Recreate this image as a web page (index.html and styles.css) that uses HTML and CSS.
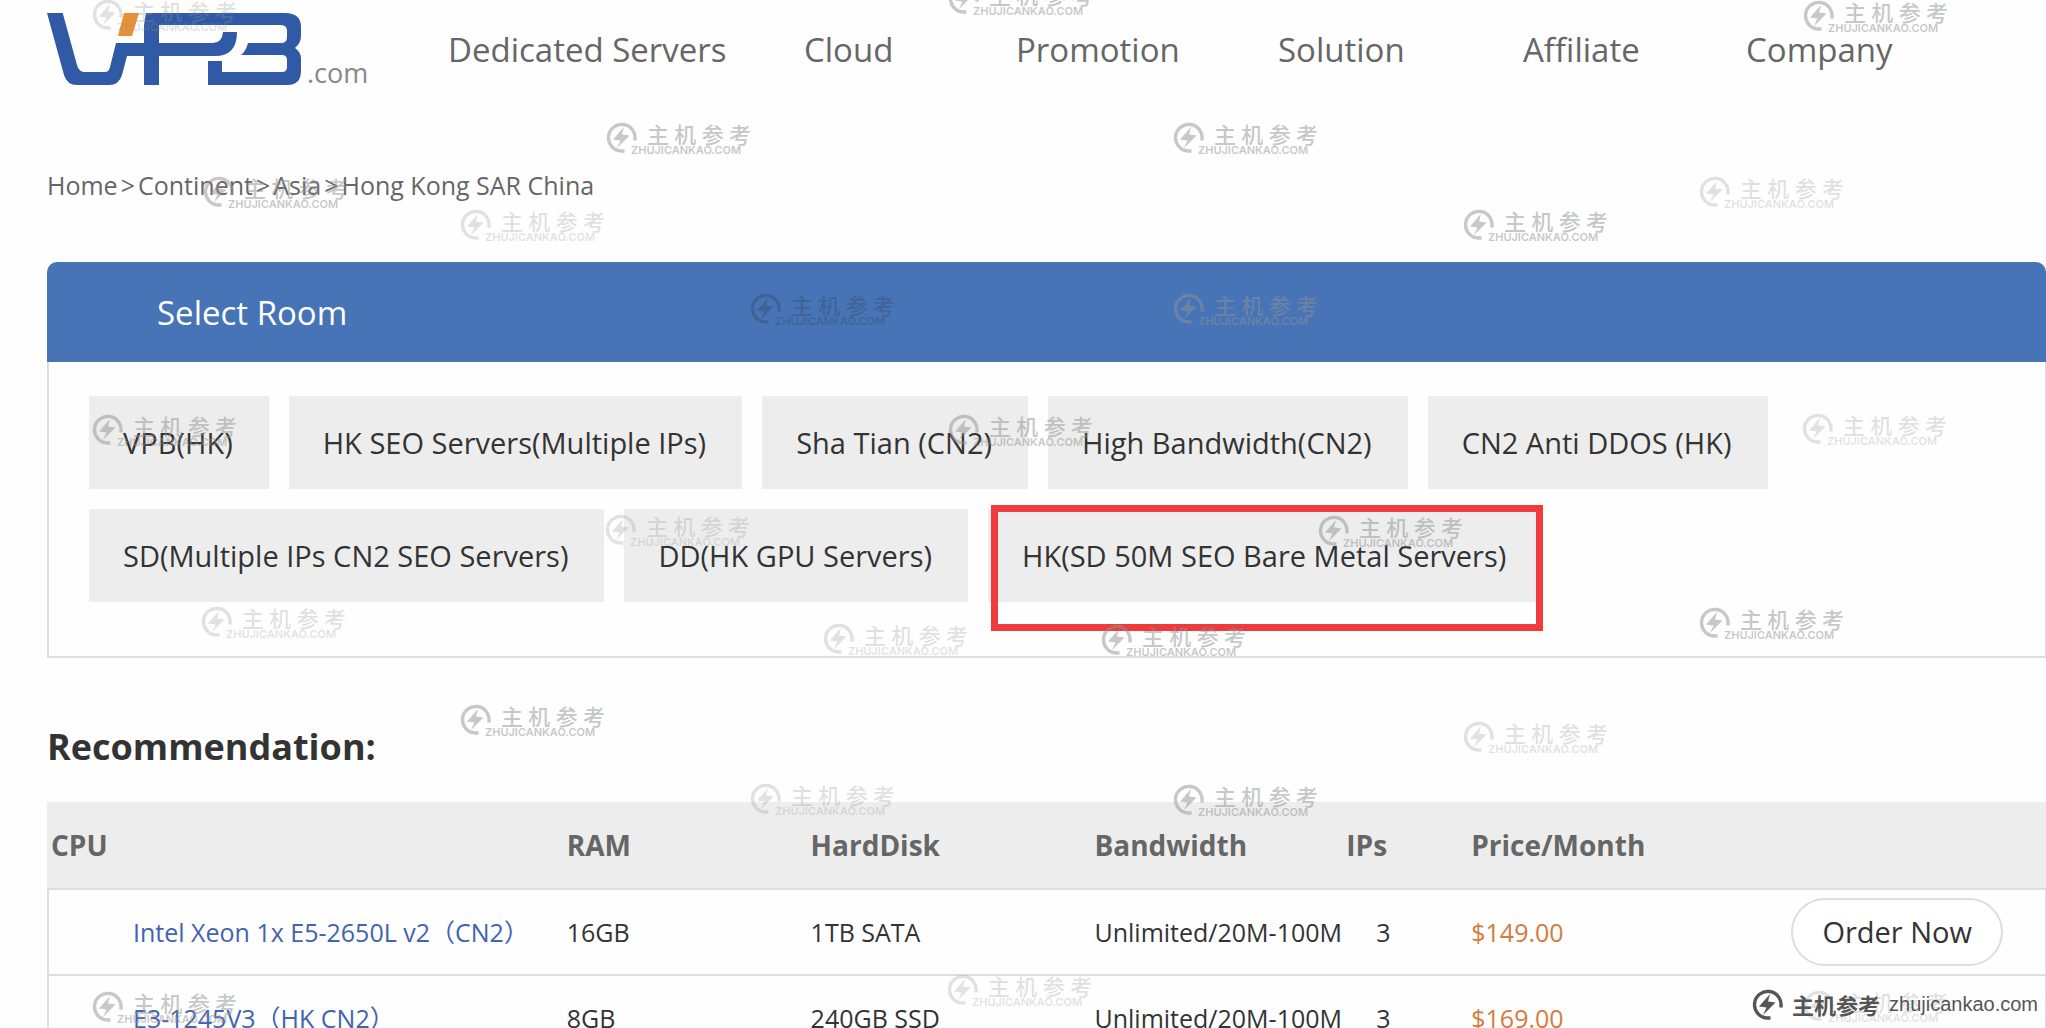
FILE: index.html
```html
<!DOCTYPE html>
<html lang="en">
<head>
<meta charset="utf-8">
<title>VPB.com - Hong Kong SAR China</title>
<link rel="stylesheet" href="styles.css">
</head>
<body>
<svg width="0" height="0" class="defs" aria-hidden="true">
  <symbol id="bolt" viewBox="0 0 31 31">
    <path d="M18.500 29h-3A13.300 13.300 0 1 1 28.800 18.500" fill="none" stroke="currentColor" stroke-width="3.400"/>
    <path d="M18 5 7 17.500l7.500 1L11 26l12.500-12.500-7.500-1z" fill="currentColor"/>
  </symbol>
</svg>
<div class="page">
  <header class="top">
    <a class="logo" href="#" aria-label="VPB.com">
      <svg width="255" height="72" viewBox="0 0 255 72" aria-hidden="true">
        <path fill="#315aa6" d="M0 0h15.700L30 52q2 7 7 7h21q4 0 5-5l6-24h28V0h141q16 0 16 14v9q0 7-6 12 6 4 6 11v12q0 14-14 14h-79V48h14v11h60q5 0 5-5v-7q0-5-5-5h-41q5-4 7-12h33q6 0 6-6v-6q0-6-6-6H112v18h54q9 0 10-11h14q0 24-22 24h-56v29H97V43H80l-5 19q-3 10-13 10H30q-10 0-13-10z"/>
        <path fill="#fefefe" d="M96 0h3l-2 12h-1z"/>
        <path fill="#e79036" d="M77 0h15l-7 23H71z"/>
      </svg>
      <span>.com</span>
    </a>
    <nav class="menu">
      <a href="#">Dedicated Servers</a>
      <a href="#">Cloud</a>
      <a href="#">Promotion</a>
      <a href="#">Solution</a>
      <a href="#">Affiliate</a>
      <a href="#">Company</a>
    </nav>
  </header>

  <main>
    <nav class="crumbs"><a href="#">Home</a><span>&gt;</span><a href="#">Continent</a><span>&gt;</span><a href="#">Asia</a><span>&gt;</span><a href="#">Hong Kong SAR China</a></nav>

    <section class="panel">
      <h1>Select Room</h1>
      <div class="rooms">
        <button>VPB(HK)</button>
        <button>HK SEO Servers(Multiple IPs)</button>
        <button>Sha Tian (CN2)</button>
        <button>High Bandwidth(CN2)</button>
        <button>CN2 Anti DDOS (HK)</button>
        <button>SD(Multiple IPs CN2 SEO Servers)</button>
        <button>DD(HK GPU Servers)</button>
        <button class="marked">HK(SD 50M SEO Bare Metal Servers)</button>
      </div>
    </section>

    <h2>Recommendation:</h2>
    <table>
      <colgroup><col class="c-cpu"><col class="c-ram"><col class="c-disk"><col class="c-band"><col class="c-ips"><col class="c-price"><col></colgroup>
      <thead>
        <tr><th>CPU</th><th>RAM</th><th>HardDisk</th><th>Bandwidth</th><th>IPs</th><th>Price/Month</th><th></th></tr>
      </thead>
      <tbody>
        <tr><td><a href="#">Intel Xeon 1x E5-2650L v2（CN2）</a></td><td>16GB</td><td>1TB SATA</td><td>Unlimited/20M-100M</td><td>3</td><td>$149.00</td><td><button class="order">Order Now</button></td></tr>
        <tr><td><a href="#">E3-1245V3（HK CN2）</a></td><td>8GB</td><td>240GB SSD</td><td>Unlimited/20M-100M</td><td>3</td><td>$169.00</td><td></td></tr>
      </tbody>
    </table>
  </main>

  <div class="marks" id="marks"></div>
  <div class="credit"><svg width="31" height="31"><use href="#bolt"/></svg><b>主机参考</b><span>zhujicankao.com</span></div>
</div>
<script src="marks.js"></script>
</body>
</html>
```
FILE: styles.css
```css
* { box-sizing: border-box; }
body {
  margin: 0;
  background: #fefefe;
  color: #333;
  font: 25px/36px "Open Sans", "Noto Sans CJK SC", sans-serif;
}
a { color: inherit; text-decoration: none; }
button { font: inherit; color: inherit; cursor: pointer; }
.defs { position: absolute; }
.page { position: relative; height: 100vh; overflow: hidden; }

.top { display: flex; height: 100px; padding-left: 47px; }
.logo { display: flex; align-items: flex-start; gap: 5px; flex: 0 0 401px; padding-top: 13px; }
.logo span { padding-top: 42px; font-size: 27px; color: #888; }
.menu {
  flex: 1;
  display: grid;
  grid-template-columns: 356fr 212fr 262fr 245fr 223fr 300fr;
  align-items: center;
  font-size: 33px;
  color: #666;
}

main { padding-left: 47px; }
.crumbs { display: flex; gap: 3px; margin: 67px 0 59px; color: #666; }

.panel h1 {
  margin: 0;
  padding: 2px 0 0 110px;
  border-radius: 10px 10px 0 0;
  background: #4674b7;
  color: #fff;
  font-size: 33px;
  font-weight: 400;
  line-height: 98px;
}
.rooms {
  display: flex;
  flex-wrap: wrap;
  gap: 20px;
  padding: 34px 240px 54px 40px;
  border: solid #ddd;
  border-width: 0 1px 2px 2px;
}
.rooms button {
  position: relative;
  height: 93px;
  padding: 0 36px 0 34px;
  border: 0;
  background: #ededed;
  font-size: 29px;
}
.marked::after {
  content: "";
  position: absolute;
  inset: -4px -1px -29px 3px;
  border: 7px solid #ee3c3c;
}

h2 { margin: 65px 0 31px; font-size: 36px; line-height: 48px; }

table { width: 100%; border-spacing: 0; table-layout: fixed; }
.c-cpu { width: 26%; }
.c-ram { width: 12%; }
.c-disk { width: 14%; }
.c-band { width: 13%; }
.c-ips { width: 6%; }
.c-price { width: 15%; }
th, td { height: 86px; padding: 0; border-bottom: 2px solid #ddd; text-align: left; white-space: nowrap; }
th { height: 88px; background: #ededed; color: #666; font-size: 28px; }
th:first-child { padding-left: 4px; }
td:first-child { padding-left: 84px; border-left: 2px solid #ddd; color: #4263b0; }
th:nth-child(3), td:nth-child(3) { padding-left: 4px; }
th:nth-child(4), td:nth-child(4) { padding-left: 8px; }
td:nth-child(5) { padding-left: 30px; }
th:nth-child(6), td:nth-child(6) { padding-left: 5px; }
td:nth-child(6) { color: #d47b3f; }
td:last-child { padding-right: 42px; border-right: 1px solid #ddd; text-align: right; }
.order {
  height: 68px;
  padding: 0 29px;
  border: 2px solid #ddd;
  border-radius: 34px;
  background: #fff;
  font-size: 29px;
}

/* Watermarks scattered over the page */
.marks { position: absolute; inset: 0; pointer-events: none; }
.mark { position: absolute; display: flex; width: 145px; height: 34px; color: rgba(145, 145, 145, .5); }
.mark.light { color: rgba(150, 150, 150, .28); }
.mark.dark { color: rgba(50, 60, 70, .3); }
.mark svg { flex: none; }
.mark div { flex: 1; }
.mark p { display: flex; justify-content: space-between; margin: 0 0 0 10px; font: 500 22px/22px "Noto Sans CJK SC", sans-serif; }
.mark small { display: block; margin-left: -6px; font: 600 11px/12px Inter, sans-serif; }

.credit {
  position: absolute;
  right: 8px;
  bottom: 8px;
  display: flex;
  align-items: center;
  gap: 9px;
  color: #555;
  line-height: 32px;
  pointer-events: none;
}
.credit b { font-size: 22px; font-family: "Noto Sans CJK SC", sans-serif; }
.credit span { font-size: 20px; font-family: "Liberation Sans", sans-serif; }
```
FILE: marks.js
```js
const marks = [
  [92, -1, 'light'], [948, -17], [1803, 0], [606, 122], [1173, 122],
  [203, 176], [1699, 176, 'light'], [460, 209, 'light'], [1463, 209],
  [750, 293, 'dark'], [1173, 293], [92, 414], [948, 414], [1802, 413, 'light'],
  [605, 514, 'light'], [1318, 515], [201, 606, 'light'], [823, 623, 'light'],
  [1101, 624], [1699, 607], [460, 704], [1463, 721, 'light'],
  [750, 783, 'light'], [1173, 784], [92, 991], [947, 974, 'light'], [1803, 990, 'light']
];
document.getElementById('marks').innerHTML = marks.map(([x, y, tone = '']) =>
  `<div class="mark ${tone}" style="left:${x}px;top:${y}px"><svg width="31" height="31"><use href="#bolt"/></svg><div><p><span>主</span><span>机</span><span>参</span><span>考</span></p><small>ZHUJICANKAO.COM</small></div></div>`
).join('');
```
